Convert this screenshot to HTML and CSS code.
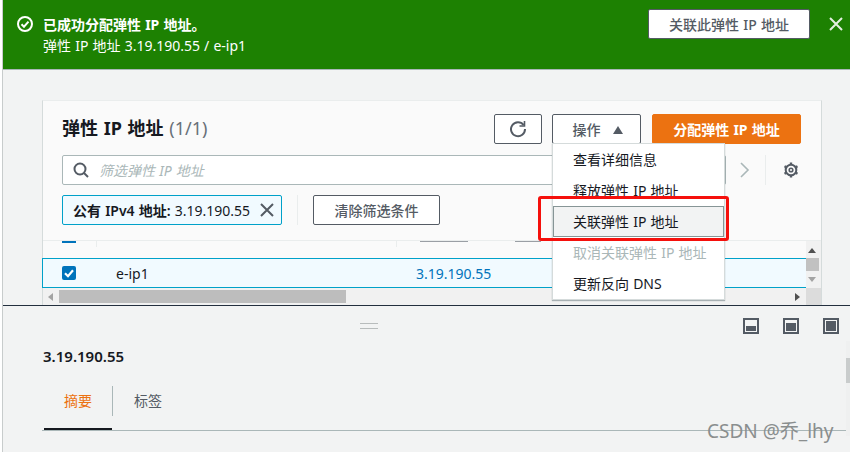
FILE: index.html
```html
<!DOCTYPE html>
<html lang="zh-CN">
<head>
    <meta charset="UTF-8">
    <title>弹性 IP 地址</title>
    <link rel="stylesheet" href="styles.css">
</head>
<body>
    <div class="page">
        <div class="banner">
            <svg class="banner-icon" width="16" height="16" viewBox="0 0 16 16" fill="none" stroke="#fff" stroke-width="2">
                <circle cx="8" cy="8" r="7"/>
                <path d="M4.500 8.200l2.500 2.500 4.500-5"/>
            </svg>
            <div class="banner-text">
                <div class="banner-title">已成功分配弹性 IP 地址。</div>
                <div>弹性 IP 地址 3.19.190.55 / e-ip1</div>
            </div>
            <button class="banner-button">关联此弹性 IP 地址</button>
            <svg class="banner-close" width="14" height="14" viewBox="0 0 14 14" fill="none" stroke="#e4efe0" stroke-width="2">
                <path d="M1 1l12 12M13 1L1 13"/>
            </svg>
        </div>

        <div class="main">
            <div class="card">
                <div class="card-head">
                    <h1>弹性 IP 地址 <span class="count">(1/1)</span></h1>
                    <button class="btn btn-refresh">
                        <svg width="18" height="18" viewBox="0 0 18 18" fill="none" stroke="#545b64" stroke-width="2">
                            <path d="M14.600 5A7 7 0 1 0 16 9"/>
                            <path d="M15.500 1v5h-5" stroke-width="1.600"/>
                        </svg>
                    </button>
                    <button class="btn btn-actions">操作 <span class="caret"></span></button>
                    <button class="btn btn-primary">分配弹性 IP 地址</button>
                </div>

                <div class="filter-row">
                    <div class="search">
                        <svg width="16" height="16" viewBox="0 0 16 16" fill="none" stroke="#545b64" stroke-width="2">
                            <circle cx="7" cy="7" r="5.500"/>
                            <path d="M11 11l4 4"/>
                        </svg>
                        <span class="search-hint">筛选弹性 IP 地址</span>
                    </div>
                    <svg class="pager" width="10" height="16" viewBox="0 0 10 16" fill="none" stroke="#aab7b8" stroke-width="1.600">
                        <path d="M1 1l7 7-7 7"/>
                    </svg>
                    <span class="filter-sep"></span>
                    <svg class="gear" width="16" height="16" viewBox="0 0 16 16" fill="none" stroke="#545b64">
                        <circle cx="8" cy="8" r="1.800" stroke-width="1.600"/>
                        <circle cx="8" cy="8" r="5.300" stroke-width="2"/>
                        <path d="M8 .5v2M8 13.500v2M1.500 4.300l1.800 1M12.700 10.700l1.800 1M14.500 4.300l-1.800 1M3.300 10.700l-1.800 1" stroke-width="2.400"/>
                    </svg>
                </div>

                <div class="chips-row">
                    <div class="chip">
                        <span><b>公有 IPv4 地址:</b> 3.19.190.55</span>
                        <svg width="14" height="14" viewBox="0 0 14 14" fill="none" stroke="#545b64" stroke-width="2">
                            <path d="M1 1l12 12M13 1L1 13"/>
                        </svg>
                    </div>
                    <span class="chips-sep"></span>
                    <button class="btn btn-clear">清除筛选条件</button>
                </div>

                <div class="table-wrap">
                    <div class="table-body">
                        <div class="thead">
                            <span class="th-check"></span>
                            <span class="th th-a"></span>
                            <span class="th th-b"></span>
                            <span class="th-label"></span>
                            <span class="th-label th-label-2"></span>
                        </div>
                        <div class="row">
                            <span class="check">
                                <svg width="14" height="14" viewBox="0 0 14 14" fill="none" stroke="#fff" stroke-width="2.200">
                                    <path d="M3 7.200l3 3 5-6"/>
                                </svg>
                            </span>
                            <span class="row-name">e-ip1</span>
                            <span class="row-ip">3.19.190.55</span>
                        </div>
                    </div>
                    <div class="vscroll">
                        <span class="arrow arrow-up"></span>
                        <span class="vthumb"></span>
                        <span class="arrow arrow-down"></span>
                    </div>
                    <div class="hscroll">
                        <span class="arrow arrow-left"></span>
                        <span class="hthumb"></span>
                        <span class="arrow arrow-right"></span>
                    </div>
                    <div class="corner"></div>
                </div>
            </div>
        </div>

        <div class="panel">
            <div class="panel-top">
                <div class="handle"></div>
                <div class="panel-icons">
                    <span class="dock dock-bottom"><i></i></span>
                    <span class="dock dock-top"><i></i></span>
                    <span class="dock dock-full"><i></i></span>
                </div>
            </div>
            <div class="panel-title">3.19.190.55</div>
            <div class="tabs">
                <span class="tab tab-active">摘要</span>
                <span class="tab">标签</span>
            </div>
            <div class="panel-scroll"></div>
        </div>

        <ul class="menu">
            <li>查看详细信息</li>
            <li>释放弹性 IP 地址</li>
            <li class="menu-hover">关联弹性 IP 地址</li>
            <li class="menu-disabled">取消关联弹性 IP 地址</li>
            <li>更新反向 DNS</li>
        </ul>
        <div class="red-box"></div>
        <div class="watermark">CSDN @乔_lhy</div>
    </div>
</body>
</html>
```
FILE: styles.css
```css
* {
    box-sizing: border-box;
}

body {
    margin: 0;
    background-color: #fff;
    color: #16191f;
    font-family: "Noto Sans", "Noto Sans CJK SC", sans-serif;
    font-size: 14px;
    word-spacing: 0.5px;
    overflow: hidden;
}

button {
    font-family: inherit;
    font-size: 14px;
    word-spacing: 0.5px;
    cursor: pointer;
}

.page {
    position: relative;
    width: 848px;
    height: 452px;
    margin-left: 2px;
    border-left: 1px solid #c8cccc;
    background-color: #f2f3f3;
    overflow: hidden;
}

/* banner */
.banner {
    display: flex;
    align-items: flex-start;
    height: 70px;
    margin-left: -1px;
    padding: 16px 0 0 15px;
    background-color: #1d8102;
    border-bottom: 1px solid #aab7b8;
    color: #fff;
    line-height: 21px;
}

.banner-icon {
    margin-right: 10px;
    flex: none;
}

.banner-text {
    flex: 1;
    margin-top: -2px;
}

.banner-title {
    font-weight: 700;
}

.banner-button {
    width: 162px;
    height: 30px;
    margin: -7px 19px 0 0;
    padding: 0;
    background-color: #fff;
    border: 1px solid #545b64;
    border-radius: 2px;
    color: #545b64;
    font-weight: 500;
}

.banner-close {
    margin: 1px 7px 0 0;
    flex: none;
}

/* card */
.main {
    height: 235px;
    padding: 30px 0 0 39px;
}

.card {
    width: 780px;
    height: 205px;
    background-color: #fafafa;
    border-left: 1px solid #d5dbdb;
    border-right: 1px solid #d5dbdb;
    border-top: 1px solid #eaeded;
}

.card-head {
    display: flex;
    align-items: center;
    height: 30px;
    margin-top: 13px;
    padding: 0 20px 0 19px;
}

h1 {
    flex: 1;
    margin: 0 0 3px;
    font-size: 18px;
    font-weight: 700;
    line-height: 30px;
    word-spacing: 1px;
}

.count {
    color: #687078;
    font-weight: 400;
}

.btn {
    height: 30px;
    padding: 0;
    background-color: #fff;
    border: 1px solid #545b64;
    border-radius: 2px;
    color: #545b64;
    font-weight: 500;
}

.btn-refresh {
    display: flex;
    align-items: center;
    justify-content: center;
    width: 48px;
    margin-right: 10px;
}

.btn-actions {
    width: 89px;
    margin-right: 11px;
    padding-left: 2px;
}

.caret {
    display: inline-block;
    width: 0;
    height: 0;
    margin-left: 8px;
    border-left: 5.5px solid transparent;
    border-right: 5.5px solid transparent;
    border-bottom: 8px solid #545b64;
    vertical-align: 1px;
}

.btn-primary {
    width: 149px;
    background-color: #ec7211;
    border-color: #ec7211;
    color: #fff;
    font-weight: 700;
}

.filter-row {
    display: flex;
    align-items: center;
    height: 30px;
    margin-top: 11px;
    padding-left: 19px;
}

.search {
    display: flex;
    align-items: center;
    width: 664px;
    height: 30px;
    padding-left: 10px;
    background-color: #fff;
    border: 1px solid #aab7b8;
    border-radius: 2px;
}

.search-hint {
    margin-left: 10px;
    color: #aab7b8;
    font-style: italic;
}

.pager {
    margin-left: 14px;
    flex: none;
}

.filter-sep {
    width: 1px;
    height: 30px;
    margin-left: 15px;
    background-color: #eaeded;
}

.gear {
    margin-left: 17px;
    flex: none;
}

.chips-row {
    display: flex;
    align-items: center;
    height: 30px;
    margin-top: 10px;
    padding-left: 19px;
}

.chip {
    display: flex;
    align-items: center;
    justify-content: space-between;
    width: 220px;
    height: 30px;
    padding: 0 7px 0 10px;
    background-color: #f1faff;
    border: 1px solid #00a1c9;
    border-radius: 2px;
    white-space: nowrap;
}

.chip b {
    font-weight: 600;
}

.chips-sep {
    width: 1px;
    height: 30px;
    margin: 0 15px;
    background-color: #eaeded;
}

.btn-clear {
    width: 127px;
}

/* table */
.table-wrap {
    display: grid;
    grid-template-columns: 763px 15px;
    grid-template-rows: 47px 17px;
    margin-top: 15px;
    border-top: 1px solid #eaeded;
}

.table-body {
    min-width: 0;
}

.thead {
    position: relative;
    height: 17px;
    overflow: hidden;
}

.th-check {
    position: absolute;
    left: 19px;
    top: 0;
    width: 14px;
    height: 2px;
    background-color: #0073bb;
}

.th {
    position: absolute;
    top: 0;
    width: 1px;
    height: 6px;
    background-color: #eaeded;
}

.th-a {
    left: 53px;
}

.th-b {
    left: 353px;
}

.th-label {
    position: absolute;
    left: 377px;
    top: 0;
    width: 48px;
    height: 1px;
    background-color: #9a9fa5;
}

.th-label-2 {
    left: 472px;
    width: 26px;
}

.row {
    display: flex;
    align-items: center;
    height: 30px;
    margin-left: -1px;
    padding-left: 19px;
    background-color: #f1faff;
    border: 1px solid #00a1c9;
    border-right: 0;
}

.check {
    display: flex;
    width: 14px;
    height: 14px;
    margin-top: -1px;
    background-color: #0073bb;
    border-radius: 2px;
}

.row-name {
    width: 300px;
    margin-left: 40px;
}

.row-ip {
    color: #0073bb;
}

.vscroll {
    display: flex;
    flex-direction: column;
    padding-top: 7px;
    background-color: #f1f1f1;
}

.vscroll .arrow {
    margin-left: 2px;
}

.vthumb {
    width: 13px;
    height: 13px;
    margin: 5px 0 6px;
    background-color: #c1c1c1;
}

.hscroll {
    display: flex;
    align-items: center;
    padding-left: 5px;
    background-color: #f1f1f1;
}

.hthumb {
    width: 287px;
    height: 13px;
    margin-left: 6px;
    background-color: #bdbdbd;
}

.corner {
    background-color: #dcdcdc;
}

.arrow {
    width: 0;
    height: 0;
    flex: none;
}

.arrow-up {
    border-left: 4px solid transparent;
    border-right: 4px solid transparent;
    border-bottom: 5px solid #505050;
}

.arrow-down {
    border-left: 4px solid transparent;
    border-right: 4px solid transparent;
    border-top: 5px solid #a3a3a3;
}

.arrow-left {
    border-top: 4px solid transparent;
    border-bottom: 4px solid transparent;
    border-right: 5px solid #a3a3a3;
}

.arrow-right {
    margin-left: 449px;
    border-top: 4px solid transparent;
    border-bottom: 4px solid transparent;
    border-left: 5px solid #505050;
}

/* bottom panel */
.panel {
    position: relative;
    height: 147px;
    border-top: 1px solid #232f3e;
}

.panel-top {
    display: flex;
    align-items: center;
    height: 28px;
    padding-top: 12px;
}

.handle {
    width: 18px;
    height: 6px;
    margin-left: 357px;
    border-top: 1px solid #b8bcbc;
    border-bottom: 1px solid #b8bcbc;
}

.panel-icons {
    display: flex;
    gap: 24px;
    margin-left: 365px;
}

.dock {
    display: flex;
    align-items: flex-end;
    width: 16px;
    height: 16px;
    padding: 1px;
    background-color: #f4f5f5;
    border: 2px solid #545b64;
}

.dock i {
    display: block;
    width: 100%;
    background-color: #545b64;
}

.dock-bottom i {
    height: 5px;
}

.dock-top i {
    height: 8px;
}

.dock-full i {
    height: 100%;
}

.panel-title {
    margin-top: 12px;
    padding-left: 40px;
    font-size: 15px;
    font-weight: 600;
    line-height: 20px;
}

.tabs {
    display: flex;
    align-items: flex-start;
    height: 45px;
    margin: 20px 0 0 39px;
    border-bottom: 1px solid #aab7b8;
}

.tab {
    width: 70px;
    height: 30px;
    padding-left: 21px;
    color: #545b64;
    line-height: 30px;
}

.tab-active {
    position: relative;
    width: 71px;
    padding-left: 22px;
    color: #ec7211;
    border-right: 1px solid #aab7b8;
}

.tab-active::after {
    content: "";
    position: absolute;
    left: 2px;
    right: 0;
    top: 42px;
    height: 2px;
    background-color: #16191f;
}

.panel-scroll {
    position: absolute;
    right: 0;
    top: 35px;
    width: 4px;
    height: 95px;
    padding-top: 17px;
    background-color: #eff0f0;
}

.panel-scroll::after {
    content: "";
    display: block;
    height: 25px;
    background-color: #c9cccc;
}

/* dropdown over the card */
.menu {
    position: absolute;
    left: 549px;
    top: 143px;
    width: 173px;
    height: 157px;
    margin: 0;
    padding: 0;
    list-style: none;
    background-color: #fff;
    border: 1px solid #d5dbdb;
    box-shadow: 0 1px 1px rgba(0, 28, 36, 0.3);
    color: #16191f;
}

.menu li {
    height: 31px;
    padding-left: 20px;
    line-height: 31px;
}

.menu-hover {
    background-color: #f2f3f3;
    outline: 1px solid #879596;
    outline-offset: -1px;
}

.menu-disabled {
    color: #aab7b8;
}

.red-box {
    position: absolute;
    left: 535px;
    top: 196px;
    width: 191px;
    height: 45px;
    border: 3px solid #f5100c;
    border-radius: 3px;
}

.watermark {
    position: absolute;
    left: 704px;
    top: 417px;
    color: #8a8e8e;
    font-size: 19px;
    line-height: 28px;
    word-spacing: 0;
    white-space: nowrap;
}
```
